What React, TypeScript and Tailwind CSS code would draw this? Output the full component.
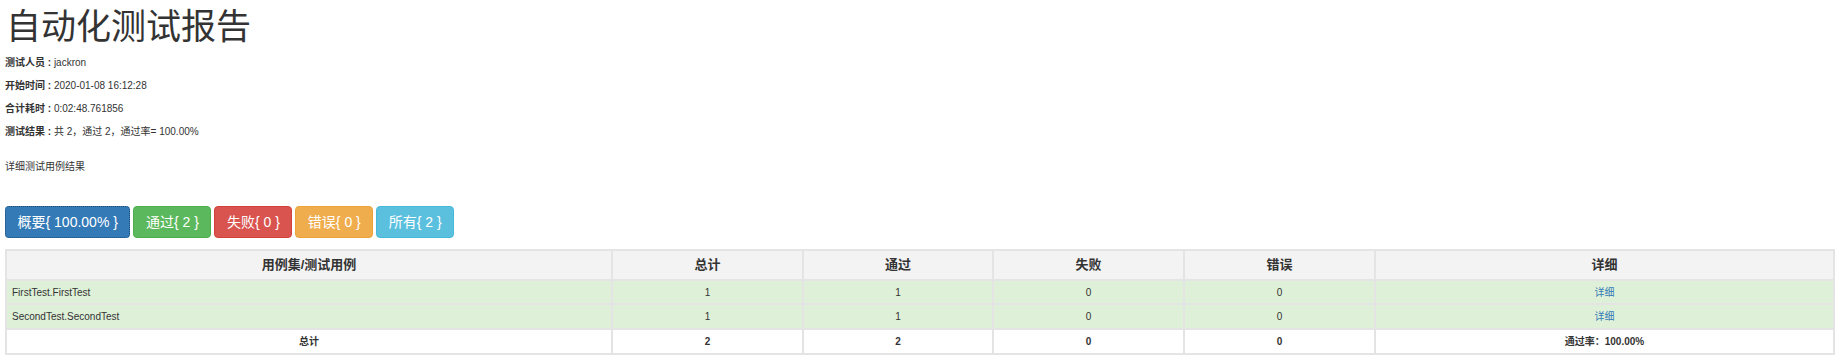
import React from "react";

const FONT = '"Liberation Sans", "Noto Sans CJK SC", sans-serif';

const infos: [string, string][] = [
  ["测试人员", "jackron"],
  ["开始时间", "2020-01-08 16:12:28"],
  ["合计耗时", "0:02:48.761856"],
  ["测试结果", "共 2，通过 2，通过率= 100.00%"],
];

const rows = [
  { name: "FirstTest.FirstTest", total: 1, pass: 1, fail: 0, err: 0 },
  { name: "SecondTest.SecondTest", total: 1, pass: 1, fail: 0, err: 0 },
];

export default function App() {
  return (
    <div
      className="w-[1840px] h-[362px] bg-white text-[#333] pl-[5px] pr-[7px] overflow-hidden"
      style={{ fontFamily: FONT }}
    >
      <h1 className="mt-[8px] text-[35px] leading-[38px] font-normal text-[#333] pl-[1px]">
        自动化测试报告
      </h1>
      <div className="mt-[10px] flex flex-col gap-[9px]">
        {infos.map(([k, v]) => (
          <p key={k} className="text-[10px] leading-[14px] m-0">
            <strong className="font-bold">{k} : </strong>
            {v}
          </p>
        ))}
      </div>
      <p className="mt-[21px] text-[10px] leading-[14px]">详细测试用例结果</p>

      <div className="mt-[32px] flex gap-[3px]">
        <button className="h-[32px] px-[11.5px] rounded-[4px] text-[14px] text-white bg-[#337ab7] border border-dotted border-[#1f4d75]">
          概要{"{"} 100.00% {"}"}
        </button>
        <button className="h-[32px] px-[11.5px] rounded-[4px] text-[14px] text-white bg-[#5cb85c] border border-[#4cae4c]">
          通过{"{"} 2 {"}"}
        </button>
        <button className="h-[32px] px-[11.5px] rounded-[4px] text-[14px] text-white bg-[#d9534f] border border-[#d43f3a]">
          失败{"{"} 0 {"}"}
        </button>
        <button className="h-[32px] px-[11.5px] rounded-[4px] text-[14px] text-white bg-[#f0ad4e] border border-[#eea236]">
          错误{"{"} 0 {"}"}
        </button>
        <button className="h-[32px] px-[11.5px] rounded-[4px] text-[14px] text-white bg-[#5bc0de] border border-[#46b8da]">
          所有{"{"} 2 {"}"}
        </button>
      </div>

      <table className="mt-[11px] w-[1828px] table-fixed border-collapse">
        <colgroup>
          <col className="w-[606px]" />
          <col className="w-[191px]" />
          <col className="w-[190px]" />
          <col className="w-[191px]" />
          <col className="w-[191px]" />
          <col className="w-[459px]" />
        </colgroup>
        <thead>
          <tr className="h-[30px] bg-[#f3f3f3]">
            {["用例集/测试用例", "总计", "通过", "失败", "错误", "详细"].map((h) => (
              <th
                key={h}
                className="border-2 border-[#e4e4e4] text-[13px] font-bold text-center p-0 text-[#333]"
              >
                {h}
              </th>
            ))}
          </tr>
        </thead>
        <tbody>
          {rows.map((r, i) => (
            <tr key={r.name} className={`${i === 0 ? "h-[24px]" : "h-[25px]"} bg-[#dff0d8] text-[10px]`}>
              <td className="border-2 border-[#e4e4e4] px-[5px] py-0 text-left">{r.name}</td>
              <td className="border-2 border-[#e4e4e4] p-0 text-center">{r.total}</td>
              <td className="border-2 border-[#e4e4e4] p-0 text-center">{r.pass}</td>
              <td className="border-2 border-[#e4e4e4] p-0 text-center">{r.fail}</td>
              <td className="border-2 border-[#e4e4e4] p-0 text-center">{r.err}</td>
              <td className="border-2 border-[#e4e4e4] p-0 text-center">
                <a className="text-[#337ab7]">详细</a>
              </td>
            </tr>
          ))}
          <tr className="h-[25px] bg-white text-[10px] font-bold">
            <td className="border-2 border-[#e4e4e4] p-0 text-center">总计</td>
            <td className="border-2 border-[#e4e4e4] p-0 text-center">2</td>
            <td className="border-2 border-[#e4e4e4] p-0 text-center">2</td>
            <td className="border-2 border-[#e4e4e4] p-0 text-center">0</td>
            <td className="border-2 border-[#e4e4e4] p-0 text-center">0</td>
            <td className="border-2 border-[#e4e4e4] p-0 text-center">通过率：100.00%</td>
          </tr>
        </tbody>
      </table>
    </div>
  );
}
